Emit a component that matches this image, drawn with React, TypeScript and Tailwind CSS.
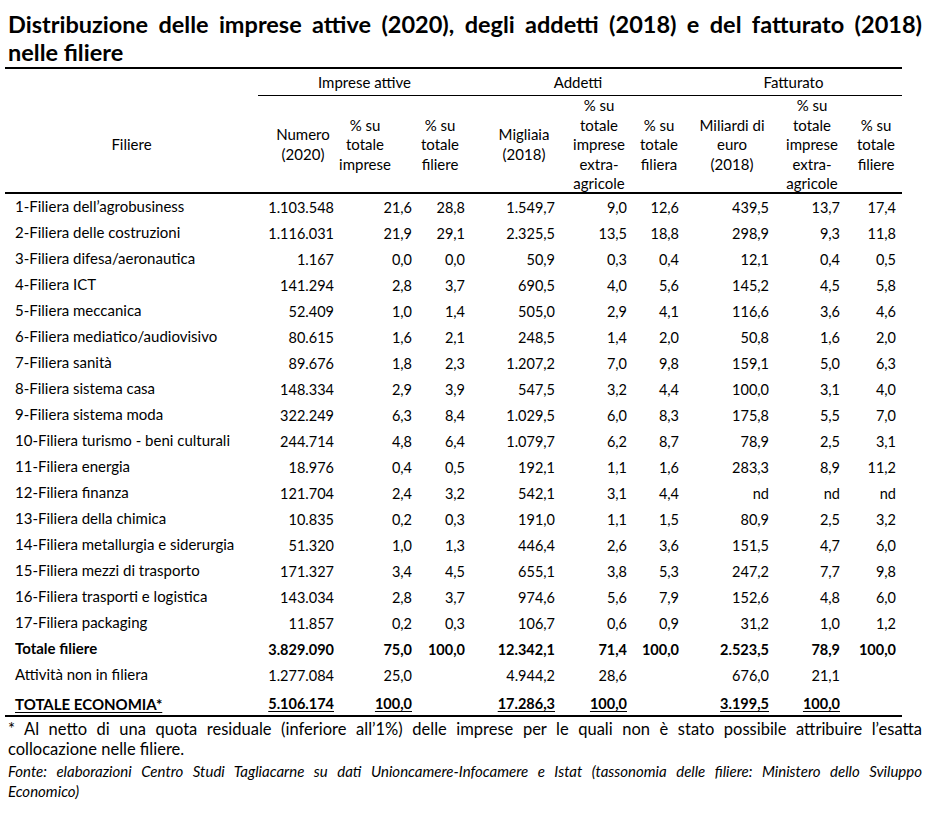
import React from 'react';

const GRID =
  'grid grid-cols-[253px_82px_78px_53px_90px_72px_52px_90px_71px_56px]';

type Row = [string, string, string, string, string, string, string, string, string, string];

const ROWS: Row[] = [
  ['1-Filiera dell’agrobusiness', '1.103.548', '21,6', '28,8', '1.549,7', '9,0', '12,6', '439,5', '13,7', '17,4'],
  ['2-Filiera delle costruzioni', '1.116.031', '21,9', '29,1', '2.325,5', '13,5', '18,8', '298,9', '9,3', '11,8'],
  ['3-Filiera difesa/aeronautica', '1.167', '0,0', '0,0', '50,9', '0,3', '0,4', '12,1', '0,4', '0,5'],
  ['4-Filiera ICT', '141.294', '2,8', '3,7', '690,5', '4,0', '5,6', '145,2', '4,5', '5,8'],
  ['5-Filiera meccanica', '52.409', '1,0', '1,4', '505,0', '2,9', '4,1', '116,6', '3,6', '4,6'],
  ['6-Filiera mediatico/audiovisivo', '80.615', '1,6', '2,1', '248,5', '1,4', '2,0', '50,8', '1,6', '2,0'],
  ['7-Filiera sanità', '89.676', '1,8', '2,3', '1.207,2', '7,0', '9,8', '159,1', '5,0', '6,3'],
  ['8-Filiera sistema casa', '148.334', '2,9', '3,9', '547,5', '3,2', '4,4', '100,0', '3,1', '4,0'],
  ['9-Filiera sistema moda', '322.249', '6,3', '8,4', '1.029,5', '6,0', '8,3', '175,8', '5,5', '7,0'],
  ['10-Filiera turismo - beni culturali', '244.714', '4,8', '6,4', '1.079,7', '6,2', '8,7', '78,9', '2,5', '3,1'],
  ['11-Filiera energia', '18.976', '0,4', '0,5', '192,1', '1,1', '1,6', '283,3', '8,9', '11,2'],
  ['12-Filiera finanza', '121.704', '2,4', '3,2', '542,1', '3,1', '4,4', 'nd', 'nd', 'nd'],
  ['13-Filiera della chimica', '10.835', '0,2', '0,3', '191,0', '1,1', '1,5', '80,9', '2,5', '3,2'],
  ['14-Filiera metallurgia e siderurgia', '51.320', '1,0', '1,3', '446,4', '2,6', '3,6', '151,5', '4,7', '6,0'],
  ['15-Filiera mezzi di trasporto', '171.327', '3,4', '4,5', '655,1', '3,8', '5,3', '247,2', '7,7', '9,8'],
  ['16-Filiera trasporti e logistica', '143.034', '2,8', '3,7', '974,6', '5,6', '7,9', '152,6', '4,8', '6,0'],
  ['17-Filiera packaging', '11.857', '0,2', '0,3', '106,7', '0,6', '0,9', '31,2', '1,0', '1,2'],
];

const TOTALE_FILIERE: Row = ['Totale filiere', '3.829.090', '75,0', '100,0', '12.342,1', '71,4', '100,0', '2.523,5', '78,9', '100,0'];
const NON_FILIERA: Row = ['Attività non in filiera', '1.277.084', '25,0', '', '4.944,2', '28,6', '', '676,0', '21,1', ''];
const TOTALE_ECONOMIA: Row = ['TOTALE ECONOMIA*', '5.106.174', '100,0', '', '17.286,3', '100,0', '', '3.199,5', '100,0', ''];

// header sub-columns: lines of text + padding to shift the centre
const SUB_HEADERS: { lines: string[]; pad: string }[] = [
  { lines: ['Numero', '(2020)'], pad: 'pl-[8px]' },
  { lines: ['% su', 'totale', 'imprese'], pad: 'pr-[28px]' },
  { lines: ['% su', 'totale', 'filiere'], pad: 'pr-[9px]' },
  { lines: ['Migliaia', '(2018)'], pad: 'pl-[16px]' },
  { lines: ['% su', 'totale', 'imprese', 'extra-', 'agricole'], pad: 'pl-[4px]' },
  { lines: ['% su', 'totale', 'filiera'], pad: '' },
  { lines: ['Miliardi di', 'euro', '(2018)'], pad: 'pl-[4px]' },
  { lines: ['% su', 'totale', 'imprese', 'extra-', 'agricole'], pad: 'pl-[3px]' },
  { lines: ['% su', 'totale', 'filiere'], pad: 'pl-[4px]' },
];

const DataRow = ({ row, bold, underline, className = 'h-[26px]' }: { row: Row; bold?: boolean; underline?: boolean; className?: string }) => (
  <div className={`${GRID} ${className} ${bold ? 'font-bold' : ''}`}>
    <div className="flex items-center pl-[10px] pb-[2px] whitespace-nowrap text-[15px]">
      <span className={underline ? 'underline underline-offset-2' : ''}>{row[0]}</span>
    </div>
    {row.slice(1).map((v, i) => (
      <div key={i} className="flex items-center justify-end pr-[6px] pt-[2px] whitespace-nowrap text-[14.5px]">
        <span className={underline ? 'underline underline-offset-2' : ''}>{v}</span>
      </div>
    ))}
  </div>
);

export default function App() {
  return (
    <div className="w-[942px] min-h-[824px] bg-white text-black font-['Lato','Liberation_Sans',sans-serif] text-[15px]">
      <h1 className="w-[914px] ml-[8px] pt-[10px] text-[23.5px] font-bold leading-[28px]">
        <span className="block text-justify [text-align-last:justify]">
          Distribuzione delle imprese attive (2020), degli addetti (2018) e del fatturato (2018)
        </span>
        <span className="block">nelle filiere</span>
      </h1>

      <div className="w-[897px] ml-[5px] mt-[1px] border-t-2 border-black">
        {/* group header row */}
        <div className={`${GRID} h-[27px]`}>
          <div />
          <div className="col-span-3 flex items-center justify-center border-b border-black">Imprese attive</div>
          <div className="col-span-3 flex items-center justify-center border-b border-black">Addetti</div>
          <div className="col-span-3 flex items-center justify-center border-b border-black">Fatturato</div>
        </div>

        {/* sub header */}
        <div className={`${GRID} h-[98px] border-b-2 border-black leading-[19.5px]`}>
          <div className="flex items-center justify-center">Filiere</div>
          {SUB_HEADERS.map((h, i) => (
            <div key={i} className={`flex items-center justify-center ${h.pad}`}>
              <div className="flex flex-col items-center whitespace-nowrap">
                {h.lines.map((l, j) => (
                  <span key={j}>{l}</span>
                ))}
              </div>
            </div>
          ))}
        </div>

        {ROWS.map((r, i) => (
          <DataRow key={i} row={r} />
        ))}
        <DataRow row={TOTALE_FILIERE} bold />
        <DataRow row={NON_FILIERA} />
        <div className="border-b-2 border-black">
          <DataRow row={TOTALE_ECONOMIA} bold underline className="h-[27px] [&>div]:items-end [&>div]:pb-0 [&>div]:pt-0" />
        </div>
      </div>

      <p className="w-[914px] ml-[8px] mt-[2px] text-[16.5px] leading-[20px]">
        <span className="block text-justify [text-align-last:justify]">
          * Al netto di una quota residuale (inferiore all’1%) delle imprese per le quali non è stato possibile attribuire l’esatta
        </span>
        <span className="block">collocazione nelle filiere.</span>
      </p>
      <p className="w-[914px] ml-[8px] mt-[2px] text-[15px] leading-[20px] italic">
        <span className="block text-justify [text-align-last:justify]">
          Fonte: elaborazioni Centro Studi Tagliacarne su dati Unioncamere-Infocamere e Istat (tassonomia delle filiere: Ministero dello Sviluppo
        </span>
        <span className="block">Economico)</span>
      </p>
    </div>
  );
}
